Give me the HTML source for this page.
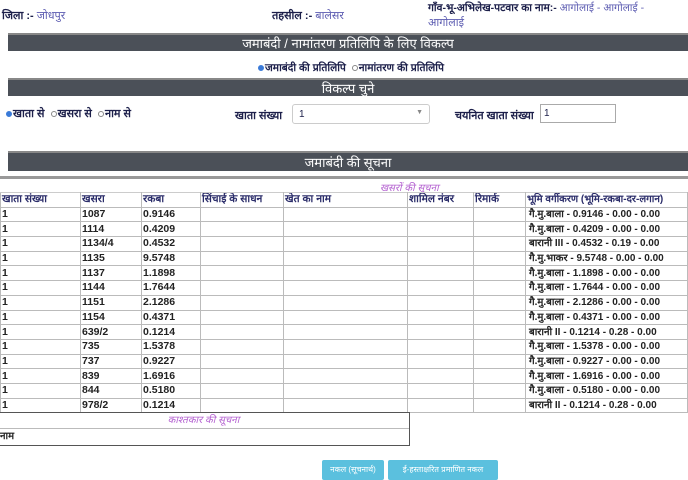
<!DOCTYPE html>
<html><head><meta charset="utf-8"><style>
*{margin:0;padding:0;box-sizing:border-box}
body{width:688px;height:480px;overflow:hidden;background:#fff;font-family:"Liberation Sans","Noto Sans CJK SC",sans-serif;color:#1c1f4a;font-size:11px;position:relative}
.a{position:absolute;white-space:nowrap}
.bar{position:absolute;left:8px;width:680px;height:18px;background:#4b5058;color:#fff;text-align:center;font-size:13px;line-height:18px;border-top:2px solid #888}
.blue{color:#5a5ab0}
table{position:absolute;left:0;top:192px;width:688px;border-collapse:collapse;font-weight:bold;font-size:10.5px;table-layout:fixed}
td{border:1px solid #bbb;height:14.7px;padding:0 1px;line-height:13px;color:#222;white-space:nowrap;overflow:hidden}
tr.h td{border-top:1px solid #ccc;color:#2b2d6a;font-weight:bold}
td.r{text-align:left;padding-left:3px;font-size:10px}
.btn{position:absolute;top:460px;height:20px;background:#5bc0de;color:#fff;font-size:8px;line-height:20px;text-align:center;border-radius:2px}
.rad{display:inline-block;width:6px;height:6px;border-radius:50%;border:1px solid #888;margin-right:1px;vertical-align:middle}
.rad.on{background:#3a7ad8;border-color:#3a7ad8}
</style></head><body>
<div class="a" style="left:2px;top:8px;font-weight:bold">जिला :- <span class="blue" style="font-weight:normal">जोधपुर</span></div>
<div class="a" style="left:272px;top:8px;font-weight:bold">तहसील :- <span class="blue" style="font-weight:normal">बालेसर</span></div>
<div class="a" style="left:428px;top:1px;font-weight:bold;font-size:10.5px">गाँव-भू-अभिलेख-पटवार का नाम:- <span class="blue" style="font-weight:normal">आगोलाई - आगोलाई -</span></div>
<div class="a blue" style="left:428px;top:15px">आगोलाई</div>
<div class="bar" style="top:33px">जमाबंदी / नामांतरण प्रतिलिपि के लिए विकल्प</div>
<div class="a" style="left:258px;top:61px;font-weight:bold;font-size:10.5px"><span class="rad on"></span>जमाबंदी की प्रतिलिपि &nbsp;<span class="rad"></span>नामांतरण की प्रतिलिपि</div>
<div class="bar" style="top:78px">विकल्प चुने</div>
<div class="a" style="left:6px;top:106px;font-weight:bold"><span class="rad on"></span>खाता से &nbsp;<span class="rad"></span>खसरा से &nbsp;<span class="rad"></span>नाम से</div>
<div class="a" style="left:235px;top:108px;font-weight:bold">खाता संख्या</div>
<div class="a" style="left:292px;top:104px;width:138px;height:20px;border:1px solid #ccc;border-radius:3px;font-size:10px;padding:4px 6px">1<span style="position:absolute;right:6px;top:4px;color:#888;font-size:7px">▼</span></div>
<div class="a" style="left:455px;top:108px;font-weight:bold">चयनित खाता संख्या</div>
<div class="a" style="left:540px;top:104px;width:76px;height:19px;border:1px solid #aaa;font-size:10px;padding:3px 3px">1</div>
<div class="bar" style="top:151px;height:20px;line-height:20px">जमाबंदी की सूचना</div>
<div class="a" style="left:0;top:176px;width:688px;height:3px;background:#999"></div>
<div class="a" style="left:380px;top:180px;color:#b35fd0;font-style:italic;font-size:10px">खसरों की सूचना</div>
<table>
<colgroup><col style="width:80px"><col style="width:61px"><col style="width:59px"><col style="width:83px"><col style="width:124px"><col style="width:66px"><col style="width:52px"><col></colgroup>
<tr class="h"><td>खाता संख्या</td><td>खसरा</td><td>रकबा</td><td>सिंचाई के साधन</td><td>खेत का नाम</td><td>शामिल नंबर</td><td>रिमार्क</td><td style="font-size:10px">भूमि वर्गीकरण (भूमि-रकबा-दर-लगान)</td></tr>
<tr><td>1</td><td>1087</td><td>0.9146</td><td></td><td></td><td></td><td></td><td class="r">गै.मु.बाला - 0.9146 - 0.00 - 0.00</td></tr>
<tr><td>1</td><td>1114</td><td>0.4209</td><td></td><td></td><td></td><td></td><td class="r">गै.मु.बाला - 0.4209 - 0.00 - 0.00</td></tr>
<tr><td>1</td><td>1134/4</td><td>0.4532</td><td></td><td></td><td></td><td></td><td class="r">बारानी III - 0.4532 - 0.19 - 0.00</td></tr>
<tr><td>1</td><td>1135</td><td>9.5748</td><td></td><td></td><td></td><td></td><td class="r">गै.मु.भाकर - 9.5748 - 0.00 - 0.00</td></tr>
<tr><td>1</td><td>1137</td><td>1.1898</td><td></td><td></td><td></td><td></td><td class="r">गै.मु.बाला - 1.1898 - 0.00 - 0.00</td></tr>
<tr><td>1</td><td>1144</td><td>1.7644</td><td></td><td></td><td></td><td></td><td class="r">गै.मु.बाला - 1.7644 - 0.00 - 0.00</td></tr>
<tr><td>1</td><td>1151</td><td>2.1286</td><td></td><td></td><td></td><td></td><td class="r">गै.मु.बाला - 2.1286 - 0.00 - 0.00</td></tr>
<tr><td>1</td><td>1154</td><td>0.4371</td><td></td><td></td><td></td><td></td><td class="r">गै.मु.बाला - 0.4371 - 0.00 - 0.00</td></tr>
<tr><td>1</td><td>639/2</td><td>0.1214</td><td></td><td></td><td></td><td></td><td class="r">बारानी II - 0.1214 - 0.28 - 0.00</td></tr>
<tr><td>1</td><td>735</td><td>1.5378</td><td></td><td></td><td></td><td></td><td class="r">गै.मु.बाला - 1.5378 - 0.00 - 0.00</td></tr>
<tr><td>1</td><td>737</td><td>0.9227</td><td></td><td></td><td></td><td></td><td class="r">गै.मु.बाला - 0.9227 - 0.00 - 0.00</td></tr>
<tr><td>1</td><td>839</td><td>1.6916</td><td></td><td></td><td></td><td></td><td class="r">गै.मु.बाला - 1.6916 - 0.00 - 0.00</td></tr>
<tr><td>1</td><td>844</td><td>0.5180</td><td></td><td></td><td></td><td></td><td class="r">गै.मु.बाला - 0.5180 - 0.00 - 0.00</td></tr>
<tr><td>1</td><td>978/2</td><td>0.1214</td><td></td><td></td><td></td><td></td><td class="r">बारानी II - 0.1214 - 0.28 - 0.00</td></tr>
</table>
<div class="a" style="left:-2px;top:412px;width:412px;height:34px;border:1px solid #555;border-left:none;background:#fff">
<div style="height:16px;border-bottom:1px solid #bbb;text-align:center;color:#b35fd0;font-style:italic;font-size:10px;line-height:16px">काश्तकार की सूचना</div>
<div style="padding-left:2px;font-weight:bold;font-size:10px;line-height:15px;color:#222">नाम</div></div>
<div class="btn" style="left:322px;width:62px">नकल (सूचनार्थ)</div>
<div class="btn" style="left:388px;width:110px">ई-हस्ताक्षरित प्रमाणित नकल</div>
</body></html>
